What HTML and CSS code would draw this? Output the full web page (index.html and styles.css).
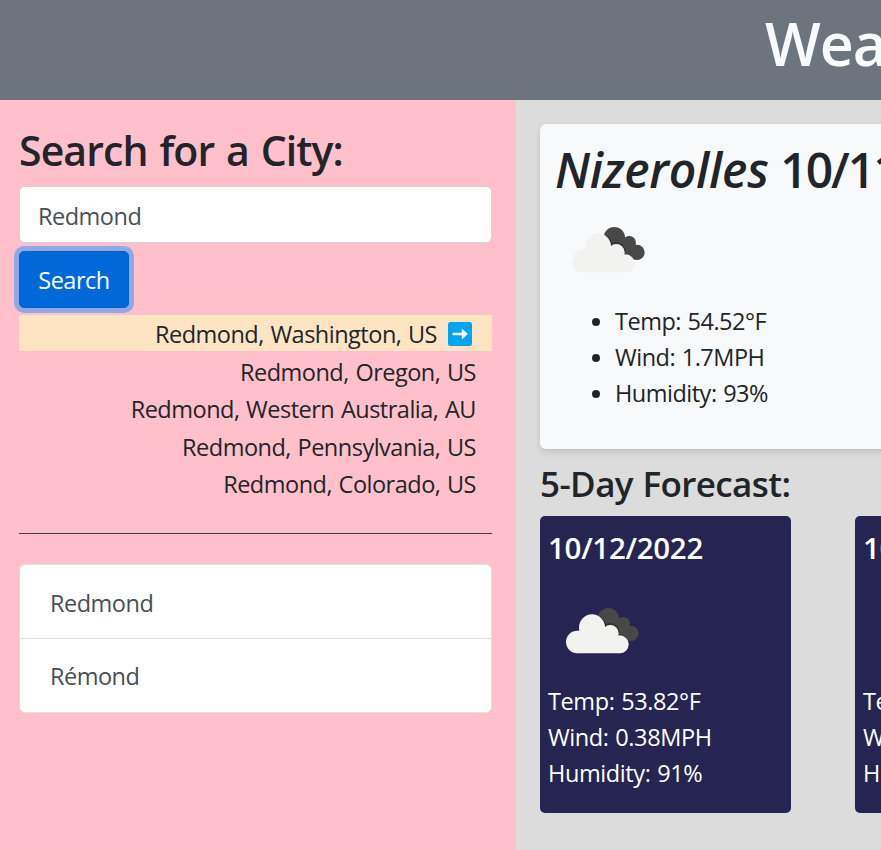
FILE: index.html
```html
<!DOCTYPE html>
<html lang="en">
<head>
<meta charset="utf-8">
<title>Weather Dashboard</title>
<link rel="stylesheet" href="styles.css">
</head>
<body>
<svg class="defs" aria-hidden="true">
  <symbol id="clouds" viewBox="0 0 219 138">
    <g fill="#484849"><circle cx="127" cy="32" r="32"/><circle cx="172" cy="47" r="20"/><circle cx="195" cy="76" r="23"/><path d="M100 45L172 28L205 96L140 100Z"/></g>
    <g fill="none" stroke="#303033" stroke-width="5"><path d="M103 28a39 39 0 0 1 15 27M118 53a25 25 0 0 1 39 26M157 82a27 27 0 0 1 25 15"/></g>
    <g fill="#f2f2f0"><circle cx="34" cy="102" r="34"/><circle cx="78" cy="58" r="39"/><circle cx="133" cy="76" r="25"/><circle cx="161" cy="109" r="27"/><path d="M34 70L78 50L135 60L161 100V136H34Z"/></g>
  </symbol>
</svg>
<header class="header"><h1>Weather Dashboard</h1></header>
<div class="layout">
  <aside class="sidebar">
    <h2>Search for a City:</h2>
    <input class="field" type="text" value="Redmond" aria-label="City">
    <button class="search">Search</button>
    <ul class="results">
      <li class="active"><span>Redmond, Washington, US</span>
        <svg class="arrow" viewBox="0 0 24 24"><rect width="24" height="24" rx="2.500" fill="#00a4ef"/><path d="M4.500 10.800h9.300V6.400L19.800 12l-6 5.600V13.200H4.500Z" fill="#fff"/></svg></li>
      <li><span>Redmond, Oregon, US</span></li>
      <li><span>Redmond, Western Australia, AU</span></li>
      <li><span>Redmond, Pennsylvania, US</span></li>
      <li><span>Redmond, Colorado, US</span></li>
    </ul>
    <hr>
    <ul class="history"><li>Redmond</li><li>Rémond</li></ul>
  </aside>
  <main class="main">
    <section class="today">
      <h2><em>Nizerolles</em> <span>10/11/2022</span></h2>
      <svg class="clouds"><use href="#clouds"/></svg>
      <ul><li>Temp: 54.52°F</li><li>Wind: 1.7MPH</li><li>Humidity: 93%</li></ul>
    </section>
    <h3>5-Day Forecast:</h3>
    <div class="forecast">
      <article class="day">
        <h4>10/12/2022</h4>
        <svg class="clouds"><use href="#clouds"/></svg>
        <p>Temp: 53.82°F</p><p>Wind: 0.38MPH</p><p>Humidity: 91%</p>
      </article>
      <article class="day">
        <h4>10/13/2022</h4>
        <div class="clouds"></div>
        <p>Temp: 55.20°F</p><p>Wind: 1.2MPH</p><p>Humidity: 90%</p>
      </article>
    </div>
  </main>
</div>
</body>
</html>
```
FILE: styles.css
```css
* { box-sizing: border-box; }
body { margin: 0; height: 850px; overflow: hidden; background: #dcdcdc; color: #212529; font: 23.5px/36px "Segoe UI", "Open Sans", sans-serif; letter-spacing: -0.5px; word-spacing: 1px; }
h1, h2, h3, h4, ul, p { margin: 0; padding: 0; font-weight: 600; }
ul, p { font-weight: 400; }
ul { list-style: none; }
.defs { display: block; width: 0; height: 0; }
.header { height: 100px; padding: 7px 0 0 765px; background: #6c757d; color: #f8f9fa; overflow: hidden; }
.header h1 { font-size: 59px; line-height: 72px; white-space: nowrap; letter-spacing: -1px; }
.layout { display: flex; height: 750px; }
.sidebar { flex: none; width: 516px; padding: 25px 24px 0 19px; background: #ffc0cb; }
.sidebar h2 { font-size: 41px; line-height: 50px; margin-bottom: 11px; letter-spacing: -0.9px; word-spacing: 2px; white-space: nowrap; }
.field { display: block; width: 473px; height: 57px; padding: 2px 19px 0 18px; border: 1px solid #ced4da; border-radius: 6px; background: #fff; color: #495057; font: inherit; letter-spacing: inherit; }
.search { display: block; width: 110px; height: 57px; margin: 8px 0 7px; padding: 0; border: 1px solid #0062cc; border-radius: 5px; background: #0069d9; box-shadow: 0 0 0 5px rgba(38, 143, 255, .5); color: #fff; font: inherit; letter-spacing: inherit; }
.results { display: grid; gap: 1.5px; }
.results li { display: flex; justify-content: flex-end; align-items: center; height: 36px; padding: 2px 16px 0 0; white-space: nowrap; }
.results .active { padding: 2px 20px 0 0; background: #ffe4c4; }
.arrow { width: 24px; height: 24px; margin-left: 11px; }
hr { height: 1px; margin: 32px 0 30px; border: 0; background: #4a393d; }
.history { border: 1px solid #dfdfdf; border-radius: 6px; background: #fff; color: #495057; overflow: hidden; }
.history li { height: 73px; padding: 20px 30px 0; }
.history li + li { height: 74px; border-top: 1px solid #dfdfdf; padding-top: 19px; }
.main { flex: 1; min-width: 0; padding: 24px 0 0 24px; overflow: hidden; }
.today { width: 1500px; height: 325px; padding: 17px 15px; border-radius: 6px; background: #f8f9fa; box-shadow: 0 3px 6px rgba(0, 0, 0, .12); }
.today h2 { font-size: 48px; line-height: 58px; white-space: nowrap; letter-spacing: -2px; }
.today em { letter-spacing: -0.2px; }
.clouds { display: block; width: 73px; height: 46px; }
.today .clouds { margin: 28px 0 30px 17px; }
.today ul { padding-left: 60px; list-style: disc; }
.main h3 { margin: 13px 0 10px; font-size: 35px; line-height: 44px; letter-spacing: -0.6px; white-space: nowrap; }
.forecast { display: flex; gap: 64px; }
.day { flex: none; width: 251px; height: 297px; padding: 14px 8px; border-radius: 5px; background: #262450; color: #fff; }
.day h4 { font-size: 29.5px; line-height: 36px; letter-spacing: -0.3px; }
.day p { letter-spacing: -0.4px; }
.day .clouds { margin: 42px 0 29px 18px; }
```
